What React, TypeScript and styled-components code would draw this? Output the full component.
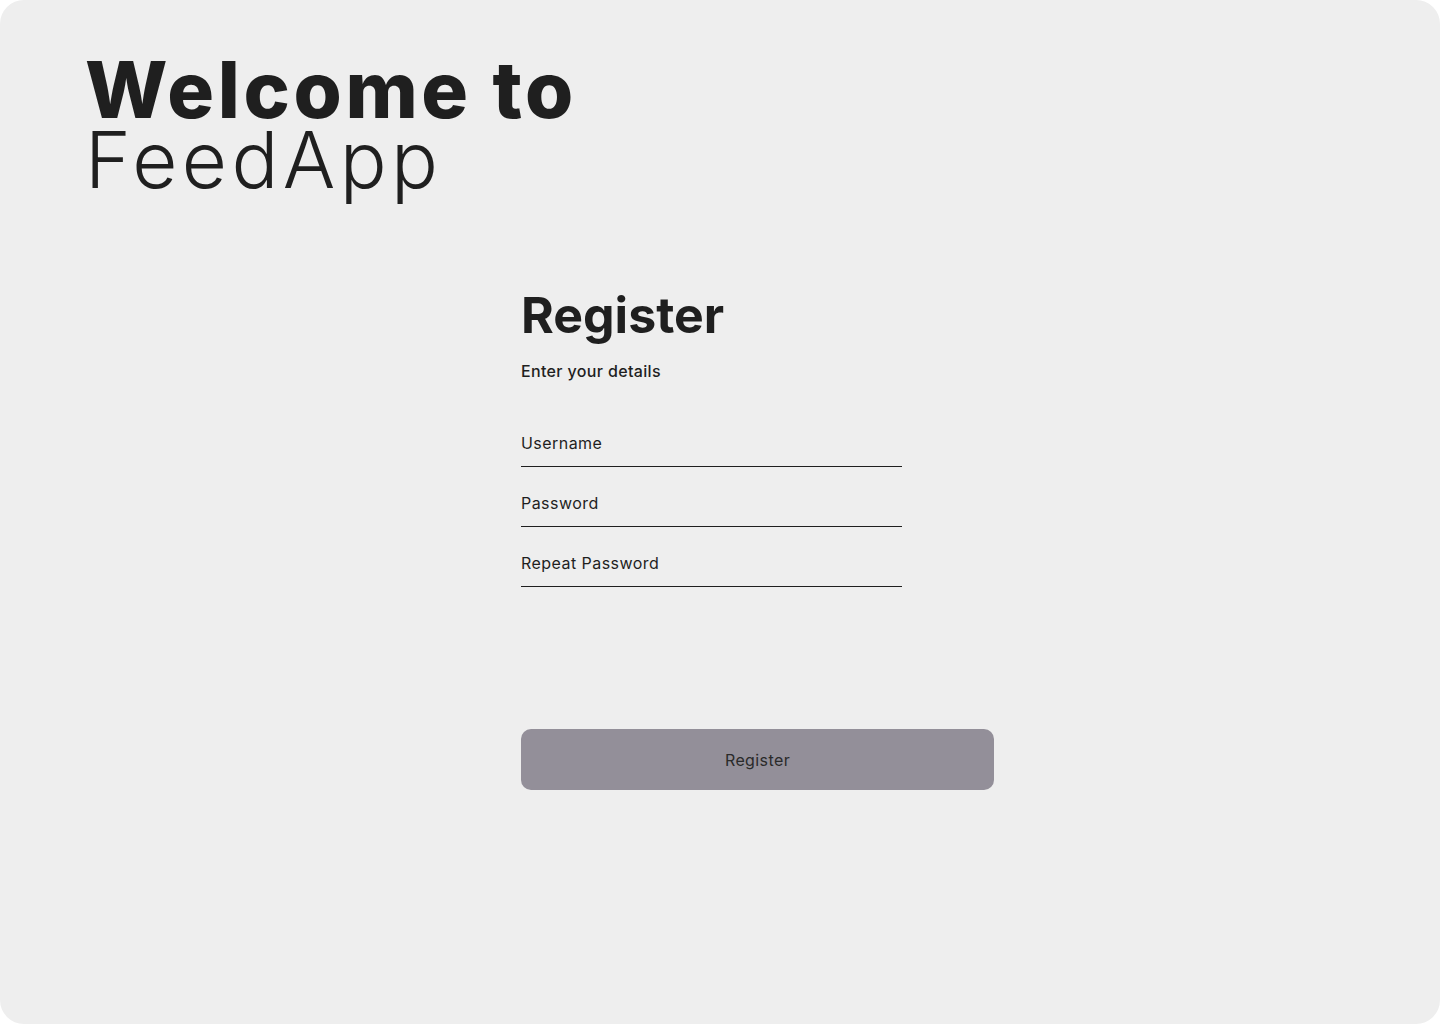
import React from 'react';
import styled, { createGlobalStyle } from 'styled-components';

const GlobalStyle = createGlobalStyle`
  html, body {
    margin: 0;
    padding: 0;
    background: #ffffff;
  }
  * {
    box-sizing: border-box;
  }
`;

const FONT = `'Inter', 'Noto Sans', 'Liberation Sans', sans-serif`;

const Screen = styled.div`
  width: 1440px;
  height: 1024px;
  background: #eeeeee;
  border-radius: 24px;
  font-family: ${FONT};
  color: #1f1f1f;
  padding: 55px 0 0 85px;
  display: flex;
  flex-direction: column;
`;

const Hero = styled.h1`
  margin: 0;
  font-size: 78px;
  line-height: 70px;
`;

const HeroStrong = styled.span`
  display: block;
  font-weight: 800;
  letter-spacing: 3.6px;
`;

const HeroLight = styled.span`
  display: block;
  font-weight: 300;
  letter-spacing: 4.4px;
`;

const FormColumn = styled.form`
  margin: 90px 0 0 436px;
  width: 473px;
  display: flex;
  flex-direction: column;
`;

const Title = styled.h2`
  margin: 0;
  font-size: 50px;
  font-weight: 700;
  line-height: 60px;
`;

const Subtitle = styled.p`
  margin: 14px 0 0;
  font-size: 16px;
  font-weight: 500;
  line-height: 24px;
  letter-spacing: 0.35px;
`;

const Fields = styled.div`
  margin-top: 36px;
  width: 381px;
  display: flex;
  flex-direction: column;
  gap: 12px;
`;

const Field = styled.input`
  height: 48px;
  border: none;
  border-bottom: 1px solid #1f1f1f;
  background: transparent;
  padding: 0;
  font-family: ${FONT};
  font-size: 16px;
  letter-spacing: 0.45px;
  color: #1f1f1f;
  outline: none;
  &::placeholder {
    color: #1f1f1f;
  }
`;

const SubmitButton = styled.button`
  margin-top: 142px;
  height: 61px;
  width: 473px;
  border: none;
  border-radius: 10px;
  background: #938f99;
  color: #2a2a2a;
  font-family: ${FONT};
  font-size: 16px;
  letter-spacing: 0.4px;
  cursor: pointer;
`;

const App = () => (
  <>
    <GlobalStyle />
    <Screen>
      <Hero>
        <HeroStrong>Welcome to</HeroStrong>
        <HeroLight>FeedApp</HeroLight>
      </Hero>
      <FormColumn onSubmit={e => e.preventDefault()}>
        <Title>Register</Title>
        <Subtitle>Enter your details</Subtitle>
        <Fields>
          <Field placeholder='Username' />
          <Field type='password' placeholder='Password' />
          <Field type='password' placeholder='Repeat Password' />
        </Fields>
        <SubmitButton type='submit'>Register</SubmitButton>
      </FormColumn>
    </Screen>
  </>
);

export default App;
